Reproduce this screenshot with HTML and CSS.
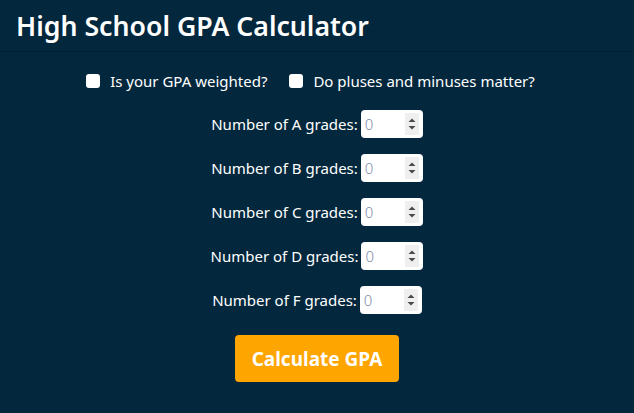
FILE: index.html
```html
<!DOCTYPE html>
<html lang="en">
<head>
<meta charset="utf-8">
<title>High School GPA Calculator</title>
<link rel="stylesheet" href="styles.css">
</head>
<body>
<header class="header">
  <h1 class="title">High School GPA Calculator</h1>
</header>
<main class="main">
  <div class="options">
    <label class="opt"><span class="check"></span>Is your GPA weighted?</label>
    <label class="opt"><span class="check"></span>Do pluses and minuses matter?</label>
  </div>
  <div class="rows">
    <div class="row"><span class="label">Number of A grades:</span><span class="num"><span class="val">0</span><span class="spin"><svg width="8" height="14" viewBox="0 0 8 14"><path d="M0.5 5 L4 1.5 L7.5 5 Z M0.5 9 L4 12.5 L7.5 9 Z" fill="#4a4a4a"/></svg></span></span></div>
    <div class="row"><span class="label">Number of B grades:</span><span class="num"><span class="val">0</span><span class="spin"><svg width="8" height="14" viewBox="0 0 8 14"><path d="M0.5 5 L4 1.5 L7.5 5 Z M0.5 9 L4 12.5 L7.5 9 Z" fill="#4a4a4a"/></svg></span></span></div>
    <div class="row"><span class="label">Number of C grades:</span><span class="num"><span class="val">0</span><span class="spin"><svg width="8" height="14" viewBox="0 0 8 14"><path d="M0.5 5 L4 1.5 L7.5 5 Z M0.5 9 L4 12.5 L7.5 9 Z" fill="#4a4a4a"/></svg></span></span></div>
    <div class="row"><span class="label">Number of D grades:</span><span class="num"><span class="val">0</span><span class="spin"><svg width="8" height="14" viewBox="0 0 8 14"><path d="M0.5 5 L4 1.5 L7.5 5 Z M0.5 9 L4 12.5 L7.5 9 Z" fill="#4a4a4a"/></svg></span></span></div>
    <div class="row"><span class="label">Number of F grades:</span><span class="num"><span class="val">0</span><span class="spin"><svg width="8" height="14" viewBox="0 0 8 14"><path d="M0.5 5 L4 1.5 L7.5 5 Z M0.5 9 L4 12.5 L7.5 9 Z" fill="#4a4a4a"/></svg></span></span></div>
  </div>
  <div class="actions">
    <button class="btn">Calculate GPA</button>
  </div>
</main>
</body>
</html>
```
FILE: styles.css
```css
* { box-sizing: border-box; }
html, body { margin: 0; padding: 0; }
body {
  background: #03283d;
  color: #ffffff;
  font-family: "Noto Sans", "Open Sans", sans-serif;
  height: 413px;
  overflow: hidden;
}
.header {
  height: 52px;
  border-bottom: 1px solid #022033;
  background: #03273c;
  display: flex;
  align-items: center;
  padding-left: 16px;
}
.title {
  margin: 0;
  font-size: 26.7px;
  font-weight: 600;
}
.main {
  display: flex;
  flex-direction: column;
  align-items: center;
}
.options {
  display: flex;
  gap: 22px;
  margin-top: 19px;
  margin-right: 13px;
  height: 20px;
  align-items: center;
}
.opt {
  display: flex;
  align-items: center;
  font-size: 15px;
}
.check {
  width: 14px;
  height: 14px;
  background: #fff;
  border-radius: 3px;
  margin-right: 10px;
}
.rows {
  display: flex;
  flex-direction: column;
  align-items: center;
  gap: 16px;
  margin-top: 19px;
}
.row {
  display: flex;
  align-items: center;
  font-size: 15px;
  height: 28px;
}
.label { margin-right: 3px; }
.num {
  width: 62px;
  height: 28px;
  background: #fff;
  border-radius: 4px;
  display: flex;
  align-items: center;
  padding: 0 4px 0 4px;
}
.val {
  flex: 1;
  color: #7f8ba6;
  font-size: 15px;
  font-weight: 300;
}
.spin {
  width: 14px;
  height: 22px;
  background: #efefef;
  display: flex;
  align-items: center;
  justify-content: center;
}
.actions { margin-top: 21px; }
.btn {
  width: 164px;
  height: 47px;
  border: none;
  border-radius: 4px;
  background: #ffa500;
  color: #fff;
  font-family: inherit;
  font-weight: 700;
  font-size: 19px;
}
```
